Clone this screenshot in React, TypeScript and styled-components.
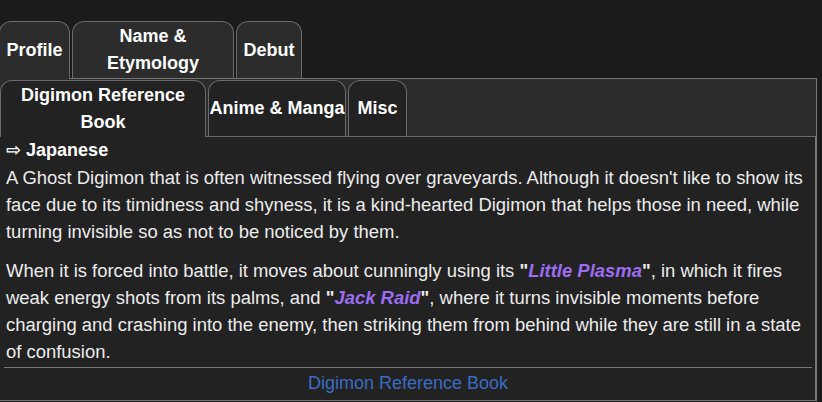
import React from 'react'
import styled, { createGlobalStyle } from 'styled-components'

const outerTabs = [
  { label: 'Profile', width: 71, active: true },
  { label: 'Name & Etymology', width: 162 },
  { label: 'Debut', width: 66 },
]

const innerTabs = [
  { label: 'Digimon Reference Book', width: 206, active: true },
  { label: 'Anime & Manga', width: 138 },
  { label: 'Misc', width: 59 },
]

const App = () => {
  return (
    <>
      <GlobalStyle />
      <Tabber>
        <TabRow $gap={2}>
          {outerTabs.map((t) => (
            <Tab key={t.label} $width={t.width} $active={t.active} $bg="#2c2c2c">
              {t.label}
            </Tab>
          ))}
        </TabRow>
        <OuterPanel>
          <TabRow $gap={2}>
            {innerTabs.map((t) => (
              <Tab key={t.label} $width={t.width} $active={t.active} $bg="#222">
                {t.label}
              </Tab>
            ))}
          </TabRow>
          <InnerPanel>
            <Heading>⇨ Japanese</Heading>
            <Paragraph>
              A Ghost Digimon that is often witnessed flying over graveyards.
              Although it doesn&apos;t like to show its face due to its timidness
              and shyness, it is a kind-hearted Digimon that helps those in need,
              while turning invisible so as not to be noticed by them.
            </Paragraph>
            <Paragraph>
              When it is forced into battle, it moves about cunningly using its{' '}
              <b>
                &quot;<Attack>Little Plasma</Attack>&quot;
              </b>
              , in which it fires weak energy shots from its palms, and{' '}
              <b>
                &quot;<Attack>Jack Raid</Attack>&quot;
              </b>
              , where it turns invisible moments before charging and crashing
              into the enemy, then striking them from behind while they are
              still in a state of confusion.
            </Paragraph>
            <Source>
              <SourceLink href="#">Digimon Reference Book</SourceLink>
            </Source>
          </InnerPanel>
        </OuterPanel>
      </Tabber>
    </>
  )
}

export default App

const GlobalStyle = createGlobalStyle`
  html, body {
    margin: 0;
    background: #1b1b1b;
  }

  body {
    font-family: "Liberation Sans", Arial, "DejaVu Sans", sans-serif;
    font-size: 18px;
    line-height: 27px;
    color: #ececec;
    overflow: hidden;
  }
`

const Tabber = styled.div`
  width: 818px;
  margin: 21px 0 0 -1px;
`

const TabRow = styled.div<{ $gap: number }>`
  display: flex;
  align-items: stretch;
  gap: ${(p) => p.$gap}px;
`

const Tab = styled.div<{ $width: number; $active?: boolean; $bg: string }>`
  box-sizing: border-box;
  width: ${(p) => p.$width}px;
  display: flex;
  align-items: center;
  justify-content: center;
  text-align: center;
  padding: 1px 0 1px;
  border: 1px solid #6a6a6a;
  border-bottom: none;
  border-radius: 12px 12px 0 0;
  background: ${(p) => p.$bg};
  color: #fff;
  font-weight: 700;
  position: relative;
  z-index: ${(p) => (p.$active ? 1 : 0)};
  margin-bottom: ${(p) => (p.$active ? '-1px' : '0')};
`

const OuterPanel = styled.div`
  border: 1px solid #777;
  background: #2c2c2c;
  padding-top: 1px;
`

const InnerPanel = styled.div`
  background: #222;
  border-top: 1px solid #6a6a6a;
  border-right: 1px solid #777;
  padding: 0 3px 3px 4px;
`

const Heading = styled.div`
  padding: 0 2px;
  font-weight: 700;
  color: #fff;
`

const Paragraph = styled.p`
  margin: 0 0 12px;
  padding: 0 2px;
  font-size: 18.45px;

  &:last-of-type {
    margin-bottom: 0;
  }
`

const Attack = styled.i`
  color: #9b6cf0;
`

const Source = styled.div`
  margin-top: 2px;
  padding-top: 2px;
  border-top: 1px solid #777;
  text-align: center;
`

const SourceLink = styled.a`
  color: #3b6cc2;
  text-decoration: none;
`
